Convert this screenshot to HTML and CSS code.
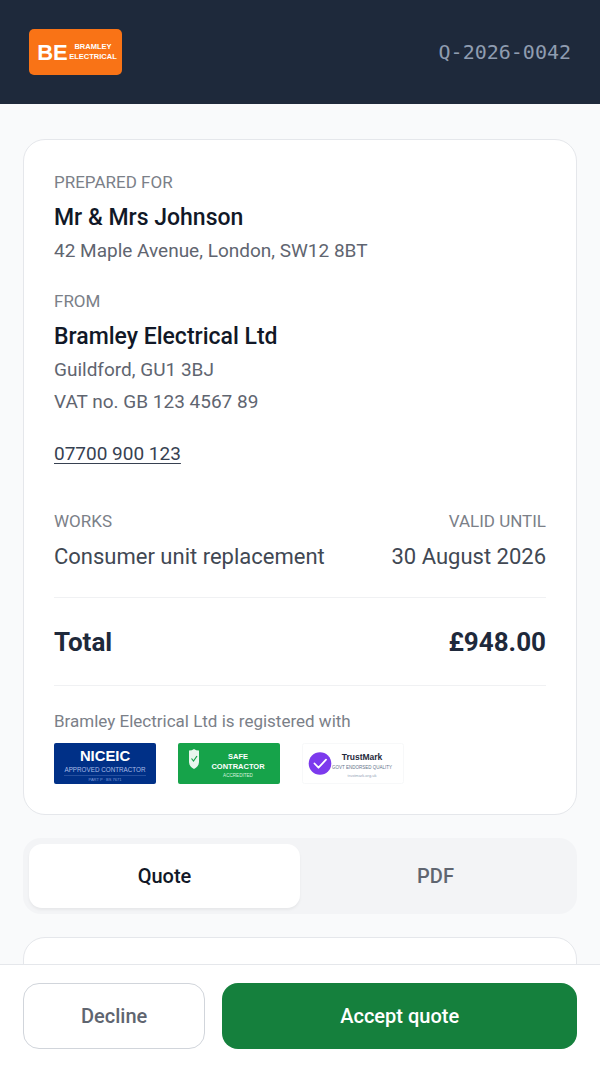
FILE: index.html
```
<!DOCTYPE html>
<html lang="en">
<head>
    <meta charset="UTF-8">
    <meta name="viewport" content="width=device-width, initial-scale=1.0">
    <title>Quote Q-2026-0042 - Bramley Electrical Ltd</title>
    <link rel="stylesheet" href="styles.css">
</head>
<body>

    <header class="header">
        <svg class="logo" viewBox="0 0 93 46" role="img" aria-label="Bramley Electrical">
            <rect width="93" height="46" rx="5" fill="#f97316"/>
            <g fill="#fff" font-family="Liberation Sans, Arial, sans-serif" font-weight="bold" text-anchor="middle">
                <text x="23.500" y="31" font-size="22">BE</text>
                <text x="64" y="20" font-size="7.500">BRAMLEY</text>
                <text x="64" y="29.500" font-size="7.500">ELECTRICAL</text>
            </g>
        </svg>
        <span class="quote-number">Q-2026-0042</span>
    </header>

    <main class="content">
        <section class="card">
            <div class="party">
                <p class="label">PREPARED FOR</p>
                <h2 class="name">Mr &amp; Mrs Johnson</h2>
                <p class="detail">42 Maple Avenue, London, SW12 8BT</p>
            </div>
            <div class="party">
                <p class="label">FROM</p>
                <h2 class="name">Bramley Electrical Ltd</h2>
                <p class="detail">Guildford, GU1 3BJ</p>
                <p class="detail">VAT no. GB 123 4567 89</p>
            </div>
            <a class="phone" href="tel:07700900123">07700 900 123</a>

            <div class="works">
                <div>
                    <p class="label">WORKS</p>
                    <p class="value">Consumer unit replacement</p>
                </div>
                <div class="works-date">
                    <p class="label">VALID UNTIL</p>
                    <p class="value">30 August 2026</p>
                </div>
            </div>

            <div class="total">
                <span>Total</span>
                <span>£948.00</span>
            </div>

            <p class="registered">Bramley Electrical Ltd is registered with</p>
            <div class="badges">
                <svg class="badge" viewBox="0 0 102 41" role="img" aria-label="NICEIC approved contractor">
                    <rect width="102" height="41" rx="2" fill="#003087"/>
                    <g font-family="Liberation Sans, Arial, sans-serif" text-anchor="middle">
                        <text x="51" y="18" font-size="14.800" font-weight="bold" fill="#fff">NICEIC</text>
                        <text x="51" y="29" font-size="6.300" fill="#a9bce6">APPROVED CONTRACTOR</text>
                        <text x="51" y="38" font-size="4" fill="#7f9bd6">PART P · BS 7671</text>
                    </g>
                    <path d="M10 32.500H92" stroke="#3f64ad" stroke-width=".6"/>
                </svg>
                <svg class="badge" viewBox="0 0 102 41" role="img" aria-label="Safe Contractor accredited">
                    <rect width="102" height="41" rx="2" fill="#16a34a"/>
                    <path d="M11 7.500q3 0 5-1.500 2 1.500 5 1.500v11c0 4-2 6-5 7.500-3-1.500-5-3.500-5-7.500z" fill="#e8f6ed"/>
                    <path d="M13.500 15.500l2 2.500 3.500-5" fill="none" stroke="#16a34a" stroke-width="1.200"/>
                    <g font-family="Liberation Sans, Arial, sans-serif" text-anchor="middle" fill="#fff">
                        <text x="60" y="16" font-size="7.500" font-weight="bold">SAFE</text>
                        <text x="60" y="25.500" font-size="7.500" font-weight="bold">CONTRACTOR</text>
                        <text x="60" y="33.500" font-size="4.600" fill="#d5f2df">ACCREDITED</text>
                    </g>
                </svg>
                <svg class="badge" viewBox="0 0 102 41" role="img" aria-label="TrustMark government endorsed quality">
                    <rect x=".5" y=".5" width="101" height="40" rx="2" fill="#fff" stroke="#f7f8f9"/>
                    <circle cx="18" cy="20.500" r="11.300" fill="#7c3aed"/>
                    <path d="M12.500 20.500l4 4.200 7.500-8" fill="none" stroke="#fff" stroke-width="1.800" stroke-linecap="round" stroke-linejoin="round"/>
                    <g font-family="Liberation Sans, Arial, sans-serif" text-anchor="middle">
                        <text x="60" y="16.500" font-size="8.500" font-weight="bold" fill="#1e293b">TrustMark</text>
                        <text x="60" y="26" font-size="4.500" fill="#64748b">GOVT ENDORSED QUALITY</text>
                        <text x="60" y="34" font-size="4" fill="#94a3b8">trustmark.org.uk</text>
                    </g>
                </svg>
            </div>
        </section>

        <div class="tabs" role="tablist">
            <button class="tab tab-active" type="button" role="tab" aria-selected="true">Quote</button>
            <button class="tab" type="button" role="tab" aria-selected="false">PDF</button>
        </div>

        <section class="card card-quote"></section>
    </main>

    <footer class="actions">
        <button class="btn btn-decline" type="button">Decline</button>
        <button class="btn btn-accept" type="button">Accept quote</button>
    </footer>

</body>
</html>
```
FILE: styles.css
```
* {
    box-sizing: border-box;
}

body {
    display: flex;
    flex-direction: column;
    height: 100vh;
    margin: 0;
    background-color: #f9fafb;
    color: #1e293b;
    font-family: Roboto, "Liberation Sans", sans-serif;
}

p,
h2 {
    margin: 0;
}

button {
    font-family: inherit;
    font-size: 20px;
    font-weight: 500;
    cursor: pointer;
}

.header {
    display: flex;
    flex-shrink: 0;
    justify-content: space-between;
    align-items: center;
    padding: 29px;
    background-color: #1e293b;
}

.logo {
    width: 93px;
    height: 46px;
}

.quote-number {
    color: #8f9cb0;
    font-family: "DejaVu Sans Mono", monospace;
    font-size: 20px;
}

/* scrolls behind the action bar */
.content {
    flex: 1;
    min-height: 0;
    overflow-y: auto;
    scrollbar-width: none;
    padding: 35px 23px 24px;
}

.card {
    padding: 30px;
    border: 1px solid #e5e7eb;
    border-radius: 22px;
    background-color: #fff;
}

.card-quote {
    min-height: 400px;
}

.party + .party {
    margin-top: 22px;
}

.label {
    margin-bottom: 8px;
    color: #7b8088;
    font-size: 17px;
    line-height: 24px;
}

.name {
    margin-bottom: 1px;
    color: #111827;
    font-size: 23px;
    font-weight: 500;
    line-height: 32px;
}

.detail {
    color: #5f6570;
    font-size: 19px;
    line-height: 32px;
}

.phone {
    display: block;
    width: fit-content;
    margin-top: 20px;
    color: #374151;
    font-size: 19px;
    line-height: 32px;
    text-underline-offset: 3px;
}

.works {
    display: flex;
    justify-content: space-between;
    margin-top: 39px;
    padding-bottom: 24px;
    border-bottom: 1px solid #f0f1f3;
}

.works-date {
    text-align: right;
}

.value {
    color: #414853;
    font-size: 22px;
    line-height: 32px;
}

.total {
    display: flex;
    justify-content: space-between;
    padding: 26px 0 25px;
    border-bottom: 1px solid #f0f1f3;
    font-size: 26px;
    font-weight: 700;
    line-height: 36px;
}

.registered {
    margin: 23px 0 10px;
    color: #7b8088;
    font-size: 17px;
    line-height: 24px;
}

.badges {
    display: flex;
    gap: 22px;
}

.badge {
    width: 102px;
    height: 41px;
}

.tabs {
    display: flex;
    margin: 23px 0;
    padding: 6px;
    border-radius: 18px;
    background-color: #f3f4f6;
}

.tab {
    flex: 1;
    height: 64px;
    border: none;
    border-radius: 13px;
    background: none;
    color: #5f6570;
}

.tab-active {
    background-color: #fff;
    color: #111827;
    box-shadow: 0 2px 3px rgba(0, 0, 0, 0.05);
}

.actions {
    display: flex;
    flex-shrink: 0;
    gap: 17px;
    padding: 18px 23px;
    border-top: 1px solid #e5e7eb;
    background-color: #fff;
}

.btn {
    height: 66px;
    padding: 0 3px;
    border-radius: 16px;
}

.btn-decline {
    flex: 1;
    border: 1px solid #d1d5db;
    background-color: #fff;
    color: #5f6570;
}

.btn-accept {
    flex: 2;
    border: none;
    background-color: #15803d;
    color: #fff;
}
```
